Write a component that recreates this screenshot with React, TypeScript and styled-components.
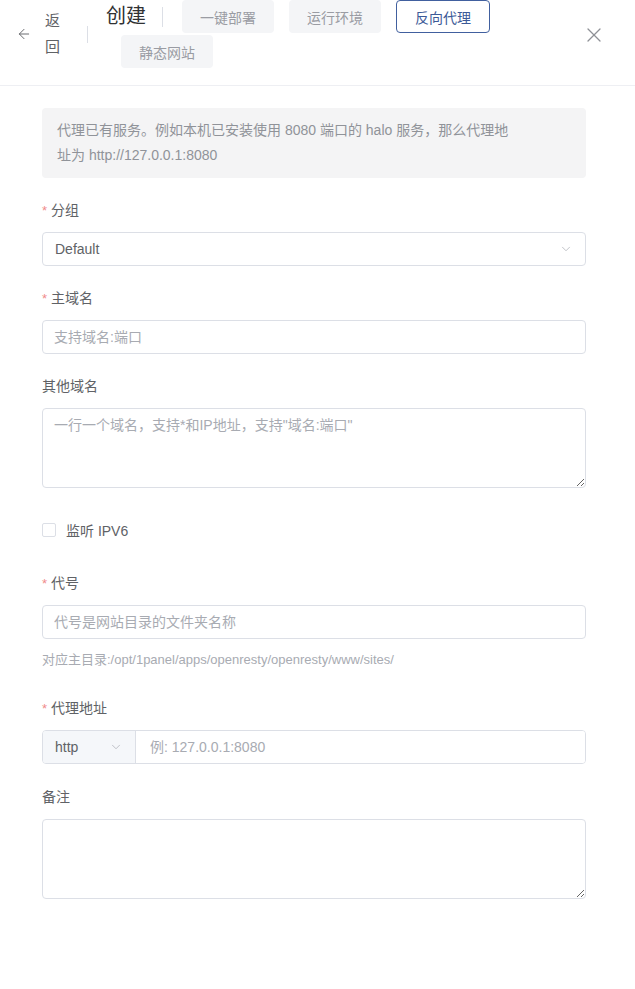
import React from 'react';
import styled, { createGlobalStyle } from 'styled-components';
import { ArrowLeft, X, ChevronDown } from 'lucide-react';

const GlobalStyle = createGlobalStyle`
  body {
    margin: 0;
    background: #ffffff;
    font-family: "Liberation Sans", "Noto Sans CJK SC", sans-serif;
    color: #606266;
  }
  * { box-sizing: border-box; }
`;

const Page = styled.div`
  width: 635px;
  min-height: 989px;
  background: #fff;
`;

const Header = styled.header`
  display: flex;
  align-items: flex-start;
  height: 86px;
  padding-left: 16px;
  border-bottom: 1px solid #eeeff3;
`;

const BackArea = styled.div`
  display: flex;
  align-items: center;
  height: 68px;
  color: #606266;
  cursor: pointer;
`;

const BackText = styled.span`
  width: 16px;
  margin-left: 13px;
  font-size: 15px;
  line-height: 26px;
  color: #606266;
  word-break: break-all;
`;

const VDivider = styled.span<{ $h: number }>`
  display: inline-block;
  width: 1px;
  height: ${(p) => p.$h}px;
  background: #dcdfe6;
`;

const DividerBox = styled.div`
  display: flex;
  align-items: center;
  height: 68px;
  margin: 0 18px 0 26px;
`;

const TitleWrap = styled.div`
  flex: 1;
  display: flex;
  flex-wrap: wrap;
  align-items: center;
  row-gap: 2px;
  padding-right: 30px;
`;

const Title = styled.span`
  font-size: 20px;
  line-height: 33px;
  color: #303133;
`;

const TitleDivider = styled.span`
  display: inline-block;
  width: 1px;
  height: 20px;
  margin: 0 4px 0 16px;
  background: #dcdfe6;
`;

const Tab = styled.button<{ $active?: boolean }>`
  height: 33px;
  margin-left: 15px;
  padding: 0 ${(p) => (p.$active ? 18 : 17)}px;
  border-radius: 4px;
  border: 1px solid ${(p) => (p.$active ? '#41609f' : 'transparent')};
  background: ${(p) => (p.$active ? '#ffffff' : '#f4f5f7')};
  color: ${(p) => (p.$active ? '#3c5a97' : '#9a9ca3')};
  font-family: inherit;
  font-size: 14px;
  cursor: pointer;
`;

const CloseBox = styled.div`
  display: flex;
  align-items: center;
  height: 70px;
  margin-right: 29px;
  color: #8e9096;
`;

const Body = styled.main`
  padding: 22px 49px 40px 42px;
`;

const Alert = styled.div`
  padding: 10px 66px 10px 15px;
  margin-bottom: 16px;
  border-radius: 4px;
  background: #f4f4f5;
  color: #909399;
  font-size: 14px;
  line-height: 25px;
`;

const FormItem = styled.div<{ $mb?: number }>`
  margin-bottom: ${(p) => (p.$mb ?? 16)}px;
`;

const Label = styled.label`
  display: block;
  height: 32px;
  margin-bottom: 6px;
  font-size: 14px;
  line-height: 32px;
  color: #606266;
`;

const Star = styled.span`
  margin-right: 4px;
  color: #f08a8a;
  font-size: 13px;
`;

const Field = styled.div`
  display: flex;
  align-items: center;
  height: 34px;
  padding: 0 12px;
  border: 1px solid #dcdfe6;
  border-radius: 4px;
  background: #fff;
  font-size: 14px;
  color: #606266;
`;

const Grow = styled.span`
  flex: 1;
`;

const TextInput = styled.input`
  width: 100%;
  height: 34px;
  padding: 0 11px;
  border: 1px solid #dcdfe6;
  border-radius: 4px;
  font-family: inherit;
  font-size: 14px;
  color: #606266;
  outline: none;
  &::placeholder { color: #a8abb2; }
`;

const TextArea = styled.textarea`
  display: block;
  width: 100%;
  height: 80px;
  padding: 5px 11px;
  border: 1px solid #dcdfe6;
  border-radius: 4px;
  font-family: inherit;
  font-size: 14px;
  line-height: 22px;
  color: #606266;
  resize: vertical;
  outline: none;
  &::placeholder { color: #a8abb2; }
`;

const CheckRow = styled.label`
  display: flex;
  align-items: center;
  gap: 10px;
  height: 32px;
  margin: 26px 0 21px;
  font-size: 14px;
  color: #606266;
`;

const CheckBox = styled.span`
  width: 14px;
  height: 14px;
  border: 1px solid #dcdfe6;
  border-radius: 2px;
  background: #fff;
`;

const Help = styled.div`
  margin-top: 11px;
  font-size: 13px;
  line-height: 20px;
  color: #a8abb2;
`;

const Group = styled.div`
  display: flex;
  height: 34px;
  border: 1px solid #dcdfe6;
  border-radius: 4px;
  overflow: hidden;
`;

const Prepend = styled.div`
  display: flex;
  align-items: center;
  width: 93px;
  padding: 0 12px;
  background: #f5f7fa;
  border-right: 1px solid #dcdfe6;
  font-size: 14px;
  color: #606266;
`;

const GroupInput = styled.input`
  flex: 1;
  padding: 0 11px 0 14px;
  border: none;
  font-family: inherit;
  font-size: 14px;
  outline: none;
  &::placeholder { color: #a8abb2; }
`;

const tabs = ['一键部署', '运行环境', '反向代理', '静态网站'];

export default function App() {
  return (
    <Page>
      <GlobalStyle />
      <Header>
        <BackArea>
          <ArrowLeft size={16} strokeWidth={1.4} />
          <BackText>返回</BackText>
        </BackArea>
        <DividerBox>
          <VDivider $h={17} />
        </DividerBox>
        <TitleWrap>
          <Title>创建</Title>
          <TitleDivider />
          {tabs.map((t) => (
            <Tab key={t} $active={t === '反向代理'}>
              {t}
            </Tab>
          ))}
        </TitleWrap>
        <CloseBox>
          <X size={24} strokeWidth={1.3} />
        </CloseBox>
      </Header>
      <Body>
        <Alert>
          代理已有服务。例如本机已安装使用 8080 端口的 halo 服务，那么代理地址为 http://127.0.0.1:8080
        </Alert>

        <FormItem>
          <Label>
            <Star>*</Star>分组
          </Label>
          <Field>
            <Grow>Default</Grow>
            <ChevronDown size={14} strokeWidth={1.2} color="#a8abb2" />
          </Field>
        </FormItem>

        <FormItem>
          <Label>
            <Star>*</Star>主域名
          </Label>
          <TextInput placeholder="支持域名:端口" />
        </FormItem>

        <FormItem $mb={0}>
          <Label>其他域名</Label>
          <TextArea placeholder={'一行一个域名，支持*和IP地址，支持"域名:端口"'} />
        </FormItem>

        <CheckRow>
          <CheckBox />
          监听 IPV6
        </CheckRow>

        <FormItem $mb={22}>
          <Label>
            <Star>*</Star>代号
          </Label>
          <TextInput placeholder="代号是网站目录的文件夹名称" />
          <Help>对应主目录:/opt/1panel/apps/openresty/openresty/www/sites/</Help>
        </FormItem>

        <FormItem $mb={17}>
          <Label>
            <Star>*</Star>代理地址
          </Label>
          <Group>
            <Prepend>
              <Grow>http</Grow>
              <ChevronDown size={14} strokeWidth={1.2} color="#a8abb2" />
            </Prepend>
            <GroupInput placeholder="例: 127.0.0.1:8080" />
          </Group>
        </FormItem>

        <FormItem>
          <Label>备注</Label>
          <TextArea />
        </FormItem>
      </Body>
    </Page>
  );
}
